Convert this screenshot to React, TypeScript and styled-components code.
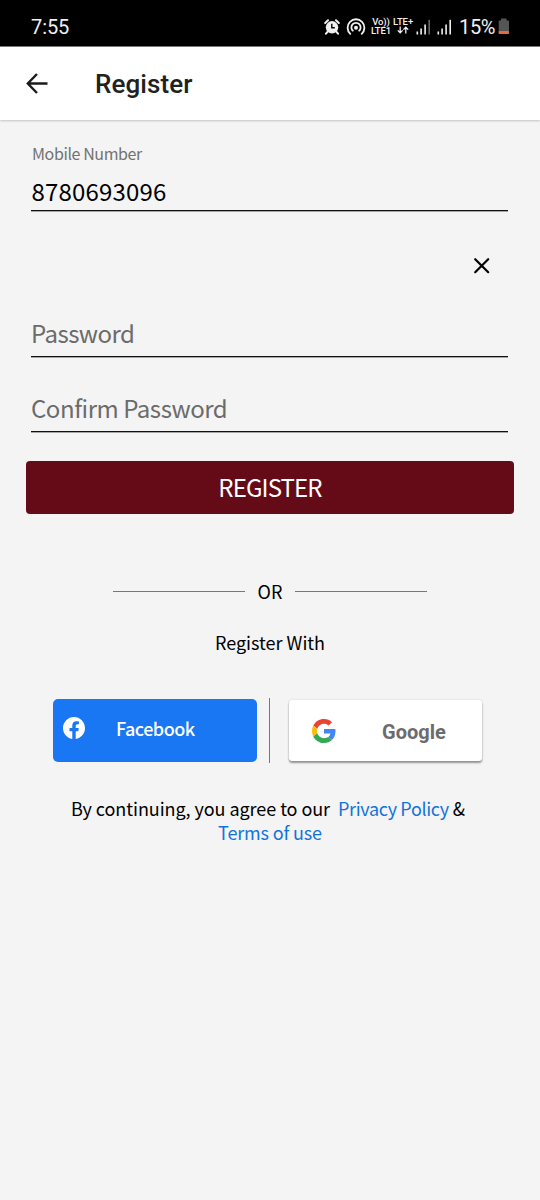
import React from "react";
import styled, { createGlobalStyle } from "styled-components";

const GlobalStyle = createGlobalStyle`
  *, *::before, *::after { box-sizing: border-box; }
  body { margin: 0; background: #f4f4f4; }
`;

const humanist = `"Noto Sans CJK SC", "Open Sans", sans-serif`;
const roboto = `Roboto, sans-serif`;

const Screen = styled.div`
  width: 540px;
  min-height: 1200px;
  background: #f4f4f4;
  color: #000;
  font-family: ${humanist};
  display: flex;
  flex-direction: column;
`;

const StatusBar = styled.div`
  height: 46px;
  padding: 7px 30px 0 31px;
  background: #000;
  color: #f0f0f0;
  font-family: ${roboto};
  display: flex;
  align-items: center;
  justify-content: space-between;
`;

const Clock = styled.span`
  font-size: 20px;
  line-height: 24px;
  letter-spacing: -0.1px;
`;

const StatusIcons = styled.div`
  display: flex;
  align-items: center;
  svg { display: block; flex: none; }
`;

const Network = styled.div<{ $left: number }>`
  display: flex;
  flex-direction: column;
  align-items: center;
  margin-left: ${(p) => p.$left}px;
  font-size: 9.5px;
  font-weight: 500;
  line-height: 9px;
  height: 19px;
  letter-spacing: -0.1px;
  white-space: nowrap;
`;

const Battery = styled.span`
  margin-left: 7px;
  margin-right: 3px;
  font-size: 20px;
  line-height: 24px;
  letter-spacing: -0.4px;
`;

const AppBar = styled.header`
  height: 74px;
  padding-left: 23px;
  border-top: 1px solid #777;
  background: #fff;
  box-shadow: 0 1px 2px rgba(0, 0, 0, 0.2);
  display: flex;
  align-items: center;
`;

const BackButton = styled.button`
  width: 28px;
  height: 28px;
  margin-top: 1px;
  padding: 0;
  border: 0;
  background: none;
  svg { display: block; }
`;

const Title = styled.h1`
  margin: 1px 0 0 44px;
  font: 500 26px/32px ${roboto};
  letter-spacing: 0.1px;
  color: #212121;
`;

const Form = styled.main`
  padding: 21px 32px 0;
  display: flex;
  flex-direction: column;
`;

const Label = styled.label`
  font-size: 16px;
  line-height: 24px;
  color: #727272;
  letter-spacing: -0.4px;
`;

const Field = styled.div<{ $top: number; $gap: number; $muted?: boolean; $track: number }>`
  margin: ${(p) => p.$top}px 0 0 -1px;
  padding-bottom: ${(p) => p.$gap}px;
  border-bottom: 1px solid #111;
  box-shadow: 0 1px 0 #a5a5a5;
  font-size: 24px;
  line-height: 39px;
  letter-spacing: ${(p) => p.$track}px;
  text-indent: ${(p) => (p.$muted ? 0 : 0.5)}px;
  color: ${(p) => (p.$muted ? "#6b6b6b" : "#000")};
`;

const ClearRow = styled.div`
  height: 102px;
  padding: 46px 18px 0 0;
  display: flex;
  justify-content: flex-end;
`;

const Submit = styled.button`
  height: 53px;
  margin: 29px -6px 0;
  padding: 0 0 2px;
  border: 0;
  border-radius: 4px;
  background: #650a17;
  color: #fff;
  font: 400 24px/39px ${humanist};
  letter-spacing: -0.9px;
`;

const OrRow = styled.div`
  margin-top: 64px;
  display: flex;
  justify-content: center;
  align-items: center;
  gap: 13px;
  font-size: 18px;
  line-height: 26px;
`;

const OrLine = styled.span`
  width: 132px;
  height: 1px;
  background: #777;
`;

const Caption = styled.p`
  margin: 25px 0 0;
  text-align: center;
  font-size: 18px;
  line-height: 26px;
`;

const Providers = styled.div`
  margin-top: 43px;
  margin-left: 21px;
  height: 65px;
  display: flex;
  align-items: center;
`;

const Facebook = styled.button`
  width: 204px;
  height: 63px;
  margin-bottom: 1px;
  padding: 0 0 4px 10px;
  border: 0;
  border-radius: 5px;
  background: #1977f3;
  color: #fff;
  font: 500 18px/26px ${humanist};
  letter-spacing: -0.5px;
  display: flex;
  align-items: center;
  gap: 31px;
`;

const Divider = styled.span`
  width: 1px;
  height: 65px;
  margin: 0 19px 0 12px;
  background: #777;
`;

const Google = styled.button`
  width: 193px;
  height: 61px;
  padding: 3px 0 0 23px;
  border: 0;
  border-radius: 3px;
  background: #fff;
  box-shadow: 0 2px 2px rgba(0, 0, 0, 0.38), 0 0 2px rgba(0, 0, 0, 0.16);
  color: #6c6c6c;
  font: 700 20px/26px ${roboto};
  display: flex;
  align-items: center;
  gap: 46px;
  svg { margin-bottom: 2px; }
`;

const Terms = styled.p`
  margin: 33px 0 0;
  text-align: center;
  font-size: 18px;
  line-height: 24px;
  letter-spacing: -0.06px;
  white-space: pre;
`;

const Link = styled.a<{ $track: number }>`
  color: #1373dc;
  letter-spacing: ${(p) => p.$track}px;
`;

const AlarmIcon = () => (
  <svg width="16" height="16" viewBox="0 0 16 16">
    <circle cx="8" cy="8.3" r="6.2" fill="#f0f0f0" />
    <path d="M1.2 4 4 1.2M14.8 4 12 1.2M3.5 12.8 2 14.7M12.5 12.8 14 14.7" stroke="#f0f0f0" strokeWidth="2" strokeLinecap="round" />
    <path d="M7.8 4.8V8.8H10.8" fill="none" stroke="#000" strokeWidth="1.4" />
  </svg>
);

const HotspotIcon = () => (
  <svg width="20" height="18" viewBox="0 0 20 18" fill="none" stroke="#f0f0f0" strokeWidth="1.8" strokeLinecap="round">
    <path d="M4.3 15.8A8.4 8.4 0 1 1 15.7 15.8" />
    <path d="M6.8 12.7A4.6 4.6 0 1 1 13.2 12.7" />
    <circle cx="10" cy="9.8" r="2" fill="#f0f0f0" stroke="none" />
  </svg>
);

const DataArrows = () => (
  <svg width="12" height="8" viewBox="0 0 12 8" fill="none" stroke="#f0f0f0" strokeWidth="1.3">
    <path d="M3.2 .5V6.8M.8 4.4 3.2 6.8 5.6 4.4M8.8 7.5V1.2M6.4 3.6 8.8 1.2 11.2 3.6" />
  </svg>
);

const SignalIcon = ({ dim }: { dim?: boolean }) => (
  <svg width="15" height="16" viewBox="0 0 15 16" fill="#f0f0f0">
    <rect x="0.5" y="12.5" width="1.6" height="3" />
    <rect x="4.3" y="9.5" width="1.6" height="6" />
    <rect x="8.3" y="5.5" width="1.6" height="10" />
    <rect x="12.4" y="0.8" width="1.6" height="14.7" fill={dim ? "#666" : "#f0f0f0"} />
  </svg>
);

const BatteryIcon = () => (
  <svg width="12" height="17" viewBox="0 0 12 17">
    <path d="M3 0.5H8.5V2.5H10.5L11 3V15.5H0.7V3L1.2 2.5H3Z" fill="#555" />
    <path d="M.7 13H11V15.2Q11 16 10.2 16H1.5Q.7 16 .7 15.2Z" fill="#e8683f" />
  </svg>
);

const FacebookIcon = () => (
  <svg width="22" height="22" viewBox="0 0 24 24" fill="#fff">
    <path d="M24 12.07C24 5.4 18.63 0 12 0S0 5.4 0 12.07C0 18.1 4.39 23.1 10.13 24v-8.44H7.08v-3.49h3.05V9.41c0-3.02 1.79-4.69 4.53-4.69 1.31 0 2.68.24 2.68.24v2.97h-1.51c-1.49 0-1.96.93-1.96 1.89v2.25h3.33l-.53 3.49h-2.8V24C19.61 23.1 24 18.1 24 12.07z" />
  </svg>
);

const GoogleIcon = () => (
  <svg width="24" height="24" viewBox="0 0 48 48">
    <path fill="#EA4335" d="M24 9.5c3.54 0 6.71 1.22 9.21 3.6l6.85-6.85C35.9 2.38 30.47 0 24 0 14.62 0 6.51 5.38 2.56 13.22l7.98 6.19C12.43 13.72 17.74 9.5 24 9.5z" />
    <path fill="#4285F4" d="M46.98 24.55c0-1.57-.15-3.09-.38-4.55H24v9.02h12.94c-.58 2.96-2.26 5.48-4.78 7.18l7.73 6c4.51-4.18 7.09-10.36 7.09-17.65z" />
    <path fill="#FBBC05" d="M10.53 28.59c-.48-1.45-.76-2.99-.76-4.59s.27-3.14.76-4.59l-7.98-6.19C.92 16.46 0 20.12 0 24c0 3.88.92 7.54 2.56 10.78l7.97-6.19z" />
    <path fill="#34A853" d="M24 48c6.48 0 11.93-2.13 15.89-5.81l-7.73-6c-2.15 1.45-4.92 2.3-8.16 2.3-6.26 0-11.57-4.22-13.47-9.91l-7.98 6.19C6.51 42.62 14.62 48 24 48z" />
  </svg>
);

export default function App() {
  return (
    <Screen>
      <GlobalStyle />
      <StatusBar>
        <Clock>7:55</Clock>
        <StatusIcons>
          <AlarmIcon />
          <svg width="6" height="1" />
          <HotspotIcon />
          <Network $left={5}>
            <span>Vo))</span>
            <span>LTE1</span>
          </Network>
          <Network $left={2}>
            <span>LTE+</span>
            <DataArrows />
          </Network>
          <svg width="3" height="1" />
          <SignalIcon dim />
          <svg width="6" height="1" />
          <SignalIcon />
          <Battery>15%</Battery>
          <BatteryIcon />
        </StatusIcons>
      </StatusBar>
      <AppBar>
        <BackButton aria-label="Back">
          <svg width="28" height="28" viewBox="0 0 28 28" fill="none" stroke="#1b1b1b" strokeWidth="2.4">
            <path d="M24.5 13.5H5.5M14 4 4.8 13.5 14 23" />
          </svg>
        </BackButton>
        <Title>Register</Title>
      </AppBar>
      <Form>
        <Label>Mobile Number</Label>
        <Field $top={6} $gap={0} $track={0.18}>8780693096</Field>
        <ClearRow>
          <svg width="17" height="17" viewBox="0 0 17 17" stroke="#000" strokeWidth="2.2" strokeLinecap="round">
            <path d="M2.2 2.2 15.2 15.2M15.2 2.2 2.2 15.2" />
          </svg>
        </ClearRow>
        <Field $top={0} $gap={4} $track={-0.55} $muted>Password</Field>
        <Field $top={31} $gap={4} $track={-0.45} $muted>Confirm Password</Field>
        <Submit>REGISTER</Submit>
        <OrRow>
          <OrLine />
          <span>OR</span>
          <OrLine />
        </OrRow>
        <Caption>Register With</Caption>
        <Providers>
          <Facebook>
            <FacebookIcon />
            <span>Facebook</span>
          </Facebook>
          <Divider />
          <Google>
            <GoogleIcon />
            <span>Google</span>
          </Google>
        </Providers>
        <Terms>
          {"By continuing, you agree to our  "}
          <Link $track={-0.35}>Privacy Policy</Link>
          {" & \n"}
          <Link $track={-0.15}>Terms of use</Link>
        </Terms>
      </Form>
    </Screen>
  );
}
